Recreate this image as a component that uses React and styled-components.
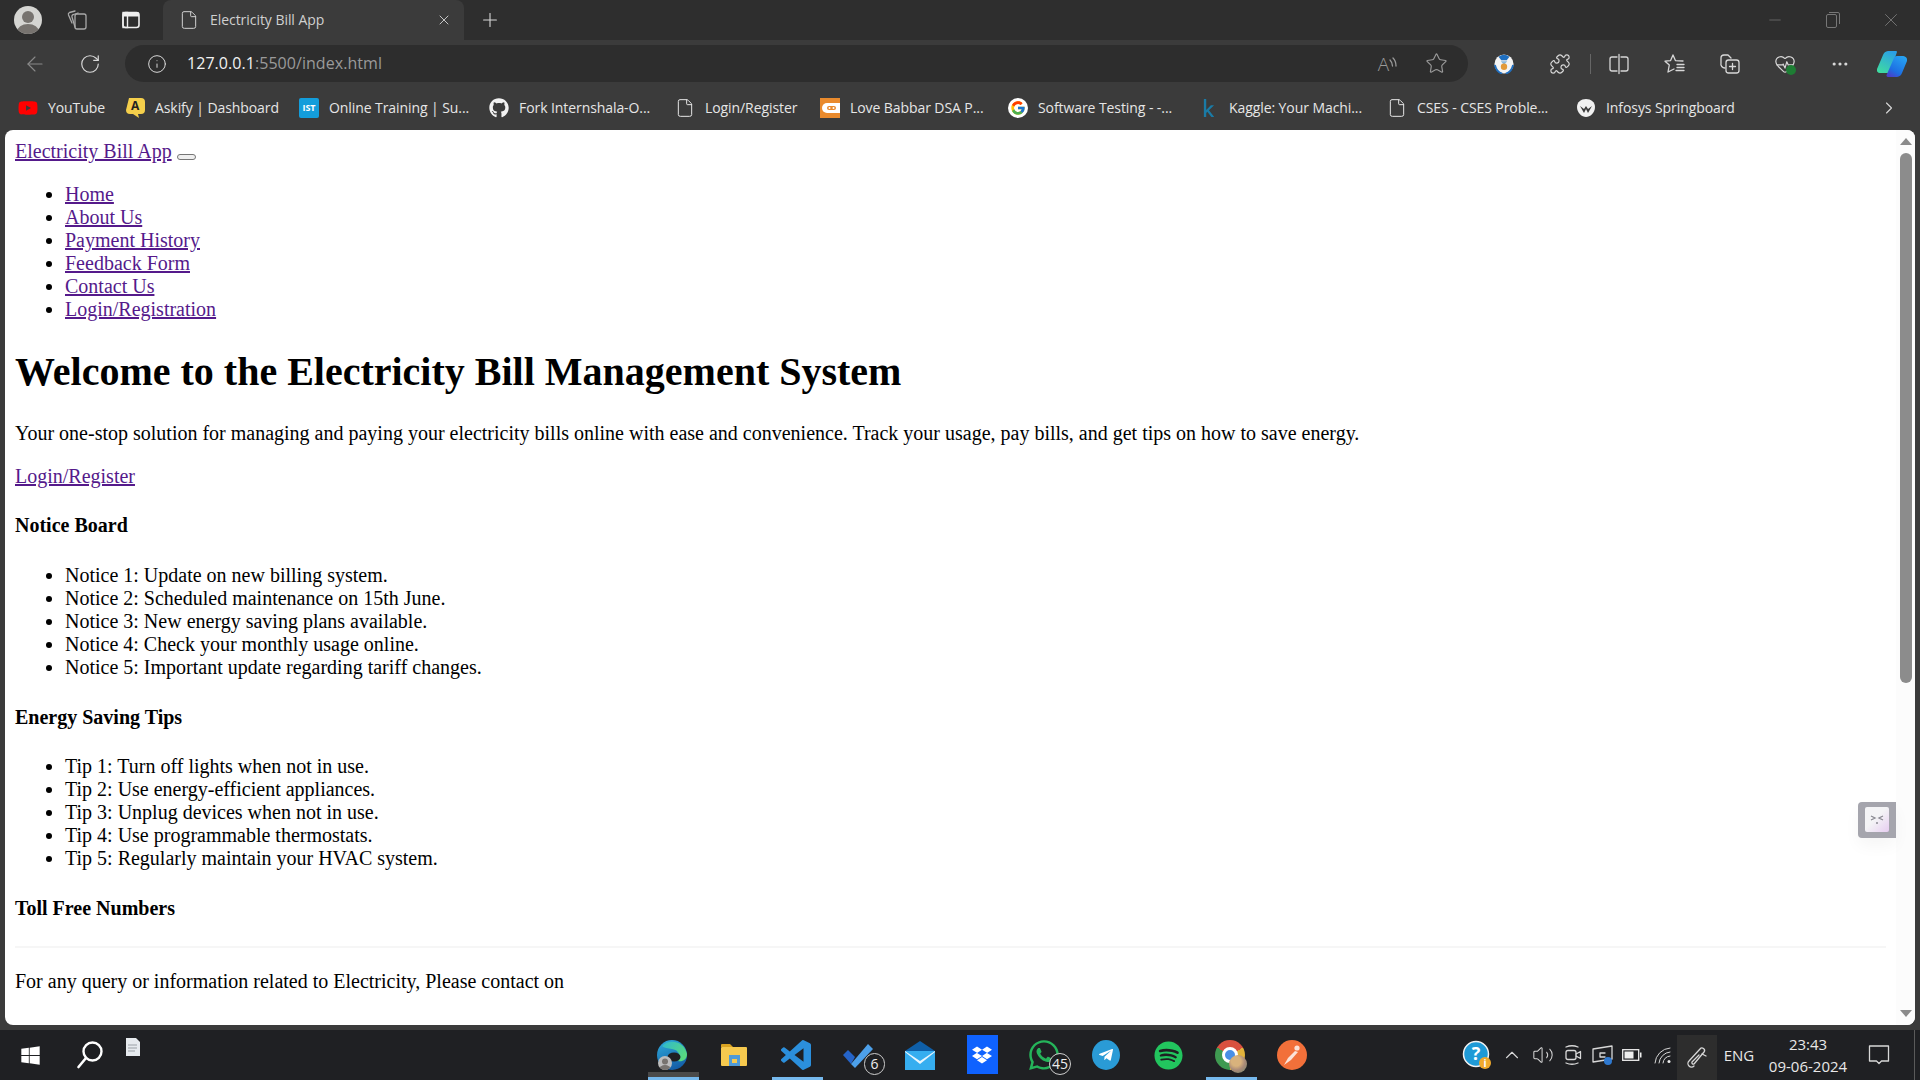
import React from 'react';
import styled, { createGlobalStyle } from 'styled-components';
import {
  ArrowLeft, RotateCw, Info, Star, X, Plus, Minus, ChevronRight, ChevronUp, File, Puzzle,
  HeartPulse, MoreHorizontal, Volume2,
} from 'lucide-react';
import { FaGithub, FaYoutube, FaWindows, FaWhatsapp, FaTelegramPlane, FaSpotify, FaDropbox, FaKaggle } from 'react-icons/fa';
import { FcGoogle } from 'react-icons/fc';

const GlobalStyle = createGlobalStyle`
  html, body { margin: 0; padding: 0; height: 100%; overflow: hidden; }
  #root { height: 100%; }
`;

const Screen = styled.div`
  width: 1920px;
  height: 1080px;
  display: flex;
  flex-direction: column;
  background: #3b3b3b;
  font-family: "Open Sans", "Liberation Sans", sans-serif;
  color: #e4e4e4;
`;

const TabStrip = styled.div`
  height: 40px;
  display: flex;
  align-items: stretch;
  background: #2e2e2e;
`;

const Slot = styled.div`
  width: ${(p) => p.$w}px;
  flex-shrink: 0;
  display: flex;
  align-items: center;
  justify-content: center;
  color: ${(p) => p.$color || '#d8d8d8'};
  position: relative;
`;

const Spacer = styled.div`
  flex: 1;
`;

const Avatar = styled.div`
  width: 28px;
  height: 28px;
  border-radius: 50%;
  background: #d5d5d2;
  overflow: hidden;
  display: flex;
`;

const Tab = styled.div`
  width: 301px;
  display: flex;
  align-items: center;
  background: #3b3b3b;
  border-radius: 8px 8px 0 0;
  padding-left: 16px;
  box-sizing: border-box;
  color: #d0d0d0;
`;

const TabTitle = styled.span`
  font-size: 14px;
  line-height: 18px;
  margin: 0 0 1px 11px;
  width: 226px;
  flex-shrink: 0;
  letter-spacing: -0.05px;
`;

const Toolbar = styled.div`
  height: 45px;
  box-sizing: border-box;
  padding: 2px 0 0 13px;
  display: flex;
  align-items: center;
`;

const AddressBar = styled.div`
  width: 1343px;
  height: 37px;
  margin-left: 2px;
  margin-right: 11px;
  border-radius: 19px;
  background: #2d2d2d;
  display: flex;
  align-items: stretch;
  padding-left: 16px;
  padding-right: 7px;
  box-sizing: border-box;
  flex-shrink: 0;
`;

const Url = styled.div`
  flex: 1;
  margin-left: 14px;
  font-size: 16px;
  line-height: 37px;
  letter-spacing: 0.05px;
  color: #f2f2f2;
`;

const UrlMuted = styled.span`
  color: #9a9a9a;
`;

const ReadLetter = styled.span`
  font-size: 19px;
  line-height: 24px;
  font-weight: 300;
  color: #9a9a9a;
`;

const Divider = styled.div`
  width: 1px;
  height: 20px;
  background: #666;
`;

const BookmarkBar = styled.div`
  height: 45px;
  display: flex;
  align-items: center;
  padding-left: 18px;
`;

const Bookmark = styled.div`
  width: ${(p) => p.$w}px;
  flex-shrink: 0;
  display: flex;
  align-items: center;
  gap: 10px;
  font-size: 14px;
  letter-spacing: -0.08px;
  white-space: nowrap;
  color: #e6e6e6;
`;

const BookmarkIcon = styled.div`
  width: 20px;
  height: 20px;
  flex-shrink: 0;
  display: flex;
  align-items: center;
  justify-content: center;
`;

const IstLogo = styled.div`
  width: 20px;
  height: 20px;
  background: #139ddb;
  border-radius: 2px;
  color: #fff;
  font-size: 9px;
  font-weight: 700;
  line-height: 20px;
  text-align: center;
`;

const GoogleDisc = styled.div`
  width: 20px;
  height: 20px;
  background: #fff;
  border-radius: 50%;
  display: flex;
  align-items: center;
  justify-content: center;
`;

const Window = styled.div`
  flex: 1;
  min-height: 0;
  margin: 0 5px 5px;
  display: flex;
  background: #fff;
  border-radius: 8px;
  overflow: hidden;
  position: relative;
`;

const Content = styled.main`
  flex: 1;
  min-width: 0;
  padding: 10px;
  overflow: hidden;
  font-family: "Liberation Serif", "Times New Roman", serif;
  font-size: 20px;
  line-height: 23px;
  color: #000;

  a { color: #551a8b; text-decoration: underline; }
`;

const Navbar = styled.nav``;

const EmptyToggle = styled.button`
  width: 19px;
  height: 6px;
  padding: 0;
  margin: 0;
  border: 1px solid #767676;
  border-radius: 3px;
  background: #efefef;
  vertical-align: -1px;
`;

const List = styled.ul`
  margin: 20px 0;
  padding-left: 50px;
`;

const Heading = styled.h1`
  font-size: 40px;
  line-height: 46px;
  margin: 28px 0 26.8px;
`;

const Paragraph = styled.p`
  margin: 20px 0;
`;

const SubHeading = styled.h4`
  font-size: 20px;
  line-height: 23px;
  margin: 26.6px 0;
`;

const Rule = styled.hr`
  border: 0;
  height: 2px;
  margin: 26.6px 0 22px;
  background: #f6f6f6;
`;

const ScrollTrack = styled.div`
  width: 19px;
  flex-shrink: 0;
  background: #fcfcfc;
  display: flex;
  flex-direction: column;
  align-items: center;
  padding-top: 8px;
  box-sizing: border-box;
`;

const ArrowUp = styled.div`
  width: 0;
  height: 0;
  border-left: 6px solid transparent;
  border-right: 6px solid transparent;
  border-bottom: 7px solid #8b8b8b;
`;

const ArrowDown = styled.div`
  width: 0;
  height: 0;
  margin-top: auto;
  margin-bottom: 8px;
  border-left: 6px solid transparent;
  border-right: 6px solid transparent;
  border-top: 7px solid #8b8b8b;
`;

const Thumb = styled.div`
  width: 12px;
  height: 530px;
  margin-top: 8px;
  border-radius: 6px;
  background: #8c8c8c;
`;

const FloatTab = styled.div`
  position: absolute;
  right: 19px;
  top: 672px;
  width: 38px;
  height: 36px;
  box-sizing: border-box;
  padding: 5px 7px 6px;
  background: #a5a5ad;
  border-radius: 4px 0 0 4px;
  box-shadow: 0 8px 16px rgba(0, 0, 0, 0.04);
`;

const FloatFace = styled.div`
  height: 100%;
  border-radius: 2px;
  background: linear-gradient(135deg, #f4f4f6 45%, #e6cdf0 100%);
  display: flex;
`;

const Taskbar = styled.div`
  height: 50px;
  display: flex;
  align-items: stretch;
  background: #1f2023;
`;

const TaskButton = styled(Slot)`
  width: 62px;
`;

const DocSlot = styled(Slot)`
  justify-content: flex-start;
  align-items: flex-start;
  padding: 8px 0 0 6px;
  box-sizing: border-box;
`;

const RunningBar = styled.div`
  position: absolute;
  bottom: 0;
  left: 7px;
  right: 4px;
  height: 3px;
  background: #76b9ed;
`;

const ActiveGlow = styled.div`
  position: absolute;
  bottom: 3px;
  left: 7px;
  right: 4px;
  height: 5px;
  background: #4a4a4a;
`;

const CountBadge = styled.div`
  position: absolute;
  left: ${(p) => p.$left}px;
  top: 23px;
  min-width: 21px;
  height: 22px;
  padding: 0 2px;
  box-sizing: border-box;
  border: 1px solid #cfcfcf;
  border-radius: 11px;
  background: #1f2023;
  color: #eee;
  font-size: 14px;
  line-height: 20px;
  text-align: center;
`;

const ChromeBall = styled.div`
  width: 30px;
  height: 30px;
  border-radius: 50%;
  background: conic-gradient(from 60deg, #e2b33c 0 120deg, #3f9a51 120deg 240deg, #d9503f 240deg 360deg);
  display: flex;
  align-items: center;
  justify-content: center;
`;

const ChromeEye = styled.div`
  width: 10px;
  height: 10px;
  border-radius: 50%;
  background: #4a8fe6;
  border: 3px solid #fff;
`;

const ChromeProfile = styled.div`
  position: absolute;
  left: 30px;
  top: 25px;
  width: 18px;
  height: 18px;
  border-radius: 50%;
  background: radial-gradient(circle at 40% 35%, #d8b27c 0 30%, #a98a78 55%, #6f8a6a 100%);
`;

const EdgeProfile = styled.div`
  position: absolute;
  left: 17px;
  top: 26px;
  width: 14px;
  height: 14px;
  border-radius: 50%;
  background: #bdbdbd;
  overflow: hidden;
  display: flex;
`;

const TelegramPlane = styled(FaTelegramPlane)`
  position: absolute;
  color: #fff;
`;

const HealthBadge = styled.div`
  position: absolute;
  right: 1px;
  bottom: 0;
  width: 10px;
  height: 10px;
  border-radius: 50%;
  background: #1e7d34;
`;

const PenBox = styled(Slot)`
  background: #2d2d2d;
  margin-top: 5px;
`;

const TrayText = styled.div`
  font-size: 15px;
  color: #e8e8e8;
`;

const Clock = styled.div`
  width: 94px;
  flex-shrink: 0;
  display: flex;
  flex-direction: column;
  align-items: center;
  justify-content: center;
  gap: 4px;
  font-size: 15px;
  line-height: 18px;
  color: #e8e8e8;
`;

const ShowDesktop = styled.div`
  width: 1px;
  margin: 0 5px 0 11px;
  flex-shrink: 0;
  background: #5a5a5a;
`;

const line = { fill: 'none', stroke: 'currentColor', strokeWidth: 1.3, strokeLinecap: 'round', strokeLinejoin: 'round' };

const navLinks = ['Home', 'About Us', 'Payment History', 'Feedback Form', 'Contact Us', 'Login/Registration'];
const notices = [
  'Notice 1: Update on new billing system.',
  'Notice 2: Scheduled maintenance on 15th June.',
  'Notice 3: New energy saving plans available.',
  'Notice 4: Check your monthly usage online.',
  'Notice 5: Important update regarding tariff changes.',
];
const tips = [
  'Tip 1: Turn off lights when not in use.',
  'Tip 2: Use energy-efficient appliances.',
  'Tip 3: Unplug devices when not in use.',
  'Tip 4: Use programmable thermostats.',
  'Tip 5: Regularly maintain your HVAC system.',
];

const PersonIcon = ({ size }) => (
  <svg width={size} height={size} viewBox="0 0 28 28">
    <circle cx="14" cy="11" r="6" fill="#77736f" />
    <ellipse cx="14" cy="26" rx="11" ry="8" fill="#77736f" />
  </svg>
);

const WorkspacesIcon = () => (
  <svg width="22" height="24" viewBox="0 0 22 24" color="#a9a9a9">
    <rect x="9" y="6" width="11" height="15" rx="2" {...line} />
    <path d="M9 19 L6 9 a2 2 0 0 1 1.5 -2.5 L12 5" {...line} />
    <path d="M6 15 L2.5 7 a2 2 0 0 1 1 -2.5 L9 3" {...line} />
  </svg>
);

const TabActionsIcon = () => (
  <svg width="20" height="20" viewBox="0 0 20 20">
    <rect x="2" y="2.5" width="16" height="15" rx="2.5" fill="none" stroke="#eee" strokeWidth="1.6" />
    <rect x="2" y="2.5" width="16" height="4" fill="#eee" />
    <rect x="2" y="2.5" width="4.5" height="15" fill="none" stroke="#eee" strokeWidth="1.4" />
  </svg>
);

const ReadWaves = () => (
  <svg width="8" height="14" viewBox="0 0 8 14" color="#9a9a9a">
    <path d="M1 3 q2.5 2.5 2.5 6 M4 1 q3 3 3 8" {...line} />
  </svg>
);

const SplitIcon = () => (
  <svg width="24" height="24" viewBox="0 0 24 24">
    <path d="M10 5 H5 a2 2 0 0 0 -2 2 V17 a2 2 0 0 0 2 2 H10 M14 5 H19 a2 2 0 0 1 2 2 V17 a2 2 0 0 1 -2 2 H14 M12 2.5 V21.5" {...line} />
  </svg>
);

const FavoritesIcon = () => (
  <svg width="24" height="24" viewBox="0 0 24 24">
    <path d="M10 3 L12.4 8.6 L20 9 M10 3 L7.6 8.6 L2 9.2 L6.3 13 L5 20 L11 17" {...line} />
    <path d="M14 12.5 H21 M14 15.5 H21 M13 18.5 H21" {...line} />
  </svg>
);

const CollectionsIcon = () => (
  <svg width="24" height="24" viewBox="0 0 24 24">
    <path d="M13 6 L10 3 H6 a3 3 0 0 0 -3 3 V11 a4 4 0 0 0 4 5" {...line} />
    <rect x="8" y="8" width="13" height="13" rx="2.5" {...line} />
    <path d="M14.5 11.5 V17.5 M11.5 14.5 H17.5" {...line} />
  </svg>
);

const CopilotIcon = () => (
  <svg width="30" height="28" viewBox="0 0 30 28">
    <defs>
      <linearGradient id="copA" x1="0.7" y1="0" x2="0.2" y2="1">
        <stop offset="0" stopColor="#2b9fe6" />
        <stop offset="1" stopColor="#3fdca0" />
      </linearGradient>
      <linearGradient id="copB" x1="0.8" y1="0" x2="0.2" y2="1">
        <stop offset="0" stopColor="#27a4f2" />
        <stop offset="0.7" stopColor="#1d6fe3" />
        <stop offset="1" stopColor="#4a3fc9" />
      </linearGradient>
    </defs>
    <path d="M11 1 H19 a1 1 0 0 1 1 1 L13 22 a2 2 0 0 1 -2 1 H3 a3 3 0 0 1 -3 -4 L6 5 a6 6 0 0 1 5 -4 Z" fill="url(#copA)" />
    <path d="M20 6 H26 a4 4 0 0 1 4 5 L25 23 a6 6 0 0 1 -5 4 H11 a2 2 0 0 1 -1 -3 L17 8 a3 3 0 0 1 3 -2 Z" fill="url(#copB)" />
  </svg>
);

const GuardIcon = () => (
  <svg width="20" height="20" viewBox="0 0 22 22">
    <circle cx="11" cy="11" r="10.5" fill="#f4f4f4" />
    <path d="M5 3 a10 10 0 0 1 12 0 L14 7 H8 Z" fill="#1f6fc0" />
    <path d="M7.5 8 H14.5 L11 12 Z" fill="#8ab8de" />
    <circle cx="11" cy="14" r="3.5" fill="#e29a3a" />
    <path d="M1 12 q2 8 8 9.5 M21 12 q-2 8 -8 9.5" fill="none" stroke="#1f6fc0" strokeWidth="2" />
  </svg>
);

const AskifyIcon = () => (
  <svg width="20" height="22" viewBox="0 0 20 22">
    <path d="M4 1 H16 a4 4 0 0 1 4 4 V13 a4 4 0 0 1 -4 4 H13 L14 21 L8 17 H5 a4 4 0 0 1 -4 -4 Z" fill="#f5cf4b" />
    <text x="10" y="13" fontSize="12" fontWeight="700" textAnchor="middle" fill="#222" fontFamily="Open Sans, sans-serif">A</text>
  </svg>
);

const BabbarIcon = () => (
  <svg width="20" height="20" viewBox="0 0 20 20">
    <rect width="20" height="20" fill="#e98a2d" />
    <path d="M20 5 H7 a5 5 0 0 0 0 10 H20 Z" fill="#fff" />
    <rect x="7" y="8" width="9" height="4" rx="2" fill="#e98a2d" />
    <circle cx="9.5" cy="10" r="1" fill="#fff" />
    <circle cx="13.5" cy="10" r="1" fill="#fff" />
  </svg>
);

const InfosysIcon = () => (
  <svg width="20" height="20" viewBox="0 0 20 20">
    <path d="M10 1 C15 1 19 4 19 9 C19 15 14 19 10 19 C6 19 1 15 1 9 C1 4 5 1 10 1 Z" fill="#f1f1f1" />
    <path d="M4 8 L8 15 L10 11 L12 15 L16 8 L12 11 L10 8 L8 11 Z" fill="#3b3b3b" />
  </svg>
);

const SearchGlass = () => (
  <svg width="30" height="30" viewBox="0 0 30 30">
    <circle cx="17.5" cy="11.5" r="9" fill="none" stroke="#fff" strokeWidth="2.4" />
    <path d="M11 18 L3.5 27" stroke="#fff" strokeWidth="2.6" strokeLinecap="round" />
  </svg>
);

const DocThumb = () => (
  <svg width="14" height="18" viewBox="0 0 14 18">
    <path d="M0 0 H10 L14 4 V18 H0 Z" fill="#e6eaee" />
    <path d="M2 7 H11 M2 10 H11 M2 13 H9" stroke="#9aa0a6" strokeWidth="1" />
  </svg>
);

const EdgeIcon = () => (
  <svg width="30" height="30" viewBox="0 0 30 30">
    <defs>
      <linearGradient id="edgeA" x1="0.1" y1="0" x2="0.5" y2="1">
        <stop offset="0" stopColor="#2ea9d9" />
        <stop offset="1" stopColor="#145fa8" />
      </linearGradient>
      <linearGradient id="edgeB" x1="0" y1="0" x2="1" y2="0.6">
        <stop offset="0" stopColor="#2fb8cf" />
        <stop offset="1" stopColor="#58d97f" />
      </linearGradient>
    </defs>
    <circle cx="15" cy="15" r="15" fill="url(#edgeA)" />
    <path d="M5 6 C11 -1 27 0 30 14 C30 20 25 22 21 21 C24 18 23 10 15 9 C11 8 7 8 5 6 Z" fill="url(#edgeB)" />
    <ellipse cx="17" cy="17" rx="6.5" ry="4.5" fill="#1f2023" />
  </svg>
);

const FolderIcon = () => (
  <svg width="28" height="24" viewBox="0 0 28 24">
    <path d="M1 2 a1 1 0 0 1 1 -1 H10 L13 4 H1 Z" fill="#d9a322" />
    <rect x="1" y="4" width="26" height="19" rx="1" fill="#f6c94e" />
    <rect x="9" y="12" width="11" height="11" fill="#4f9ad6" />
    <rect x="12" y="16" width="5" height="4" fill="#f6c94e" />
  </svg>
);

const VsCodeIcon = () => (
  <svg width="30" height="30" viewBox="0 0 24 24">
    <path fill="#2b8fdc" d="M23.15 2.587L18.21.21a1.494 1.494 0 0 0-1.705.29l-9.46 8.63-4.12-3.128a.999.999 0 0 0-1.276.057L.327 7.261A1 1 0 0 0 .326 8.74L3.899 12 .326 15.26a1 1 0 0 0 .001 1.479L1.65 17.94a.999.999 0 0 0 1.276.057l4.12-3.128 9.46 8.63a1.492 1.492 0 0 0 1.704.29l4.942-2.377A1.5 1.5 0 0 0 24 20.06V3.939a1.5 1.5 0 0 0-.85-1.352zm-5.146 14.861L10.826 12l7.178-5.448v10.896z" />
  </svg>
);

const TodoIcon = () => (
  <svg width="32" height="28" viewBox="0 0 32 28">
    <path d="M1 14 L6 9 L13 16 L9 23 Z" fill="#2564c9" />
    <path d="M9 23 L26 3 L31 8 L13 27 Z" fill="#4da0ea" />
  </svg>
);

const MailIcon = () => (
  <svg width="32" height="29" viewBox="0 0 32 29">
    <path d="M1 10 L16 0 L31 10 V14 H1 Z" fill="#0f5fa8" />
    <rect x="1" y="10" width="30" height="19" fill="#36aef0" />
    <path d="M1 10 L16 20 L31 10 V11 L16 23 L1 11 Z" fill="#e8f6fe" />
  </svg>
);

const DropboxSquare = styled.div`
  width: 31px;
  height: 39px;
  background: #0f62fe;
  display: flex;
  align-items: center;
  justify-content: center;
  color: #fff;
  margin-bottom: 1px;
`;

const PostmanIcon = () => (
  <svg width="30" height="30" viewBox="0 0 30 30">
    <circle cx="15" cy="15" r="15" fill="#f2703a" />
    <circle cx="20" cy="8" r="2.6" fill="#fbe3d8" />
    <path d="M18 11 L21 12 L14 20 L7 25 L11 18 Z" fill="#fbe3d8" />
  </svg>
);

const HelpIcon = () => (
  <svg width="30" height="30" viewBox="0 0 30 30">
    <circle cx="14" cy="14" r="12.5" fill="#1f9ad6" stroke="#f2f2f2" strokeWidth="1.5" />
    <text x="14" y="20" fontSize="18" fontWeight="700" textAnchor="middle" fill="#fff" fontFamily="Open Sans, sans-serif">?</text>
    <circle cx="23" cy="23" r="6" fill="#f0a92c" />
    <text x="23" y="27" fontSize="10" fontWeight="700" textAnchor="middle" fill="#fff" fontFamily="Open Sans, sans-serif">i</text>
  </svg>
);

const MeetIcon = () => (
  <svg width="20" height="22" viewBox="0 0 20 22">
    <rect x="3" y="6.5" width="10" height="9" rx="2" {...line} />
    <path d="M13 10 L17.5 7.5 V14.5 L13 12" {...line} />
    <path d="M3 3 Q9 0.5 15 3 M3 19 Q9 21.5 15 19" {...line} />
  </svg>
);

const DisplayIcon = () => (
  <svg width="24" height="22" viewBox="0 0 24 22">
    <path d="M2 5 L21 2 V15 L2 18 Z" {...line} />
    <path d="M9 9 H14 M9 13 H14 M9 9 V13" {...line} />
    <circle cx="17" cy="17" r="4" fill="#2f79d0" />
  </svg>
);

const BatteryIcon = () => (
  <svg width="20" height="12" viewBox="0 0 20 12">
    <rect x="0.7" y="0.7" width="16" height="10.6" fill="none" stroke="#eee" strokeWidth="1.3" />
    <rect x="2.5" y="2.5" width="9" height="7" fill="#eee" />
    <rect x="18" y="3.5" width="1.5" height="5" fill="#eee" />
  </svg>
);

const WifiIcon = () => (
  <svg width="18" height="18" viewBox="0 0 18 18">
    <path d="M1 17 A16 16 0 0 1 16 2 M5 17 A12 12 0 0 1 16 6 M9 17 A8 8 0 0 1 16 10" {...line} strokeWidth="1" />
    <circle cx="15" cy="15.5" r="1.5" fill="#eee" />
  </svg>
);

const PenIcon = () => (
  <svg width="22" height="24" viewBox="0 0 22 24">
    <path d="M8 20 a3.5 3.5 0 0 1 -5 -5 L14 3 a2.5 2.5 0 0 1 4 3 L8 18 a1.5 1.5 0 0 1 -2 -2 L13 9" {...line} />
    <path d="M16 8 L20 10" {...line} />
  </svg>
);

const NotifyIcon = () => (
  <svg width="22" height="22" viewBox="0 0 22 22">
    <path d="M1.5 2 H20.5 V17 H13.5 L11 19.5 L8.5 17 H1.5 Z" {...line} />
  </svg>
);

const bookmarks = [
  { w: 107, label: 'YouTube', icon: <FaYoutube size={20} color="#f00" /> },
  { w: 174, label: 'Askify | Dashboard', icon: <AskifyIcon /> },
  { w: 190, label: 'Online Training | Su...', icon: <IstLogo>IST</IstLogo> },
  { w: 186, label: 'Fork Internshala-O...', icon: <FaGithub size={20} color="#f2f2f2" /> },
  { w: 145, label: 'Login/Register', icon: <File size={20} strokeWidth={1.2} /> },
  { w: 188, label: 'Love Babbar DSA P...', icon: <BabbarIcon /> },
  { w: 191, label: 'Software Testing - -...', icon: <GoogleDisc><FcGoogle size={16} /></GoogleDisc> },
  { w: 188, label: 'Kaggle: Your Machi...', icon: <FaKaggle size={18} color="#1a7ba6" /> },
  { w: 189, label: 'CSES - CSES Proble...', icon: <File size={20} strokeWidth={1.2} /> },
  { w: 303, label: 'Infosys Springboard', icon: <InfosysIcon /> },
];

function App() {
  return (
    <Screen>
      <GlobalStyle />

      <TabStrip>
        <Slot $w={56}><Avatar><PersonIcon size={28} /></Avatar></Slot>
        <Slot $w={42}><WorkspacesIcon /></Slot>
        <Slot $w={65}><TabActionsIcon /></Slot>
        <Tab>
          <File size={20} strokeWidth={1.2} />
          <TabTitle>Electricity Bill App</TabTitle>
          <X size={16} strokeWidth={1.4} />
        </Tab>
        <Slot $w={52}><Plus size={22} strokeWidth={1.2} /></Slot>
        <Spacer />
        <Slot $w={58} $color="#777"><Minus size={18} strokeWidth={1} /></Slot>
        <Slot $w={58} $color="#777">
          <svg width="14" height="16" viewBox="0 0 14 16" fill="none" stroke="currentColor">
            <rect x="0.5" y="2.5" width="10" height="13" rx="1.5" />
            <path d="M3 .5 H12 a1.5 1.5 0 0 1 1.5 1.5 V12" />
          </svg>
        </Slot>
        <Slot $w={58} $color="#777"><X size={22} strokeWidth={1} /></Slot>
      </TabStrip>

      <Toolbar>
        <Slot $w={44} $color="#8a8a8a"><ArrowLeft size={24} strokeWidth={1.1} /></Slot>
        <Slot $w={66}><RotateCw size={22} strokeWidth={1.3} /></Slot>
        <AddressBar>
          <Slot $w={32}><Info size={20} strokeWidth={1.2} /></Slot>
          <Url>127.0.0.1<UrlMuted>:5500/index.html</UrlMuted></Url>
          <Slot $w={49}><ReadLetter>A</ReadLetter><ReadWaves /></Slot>
          <Slot $w={49} $color="#9a9a9a"><Star size={23} strokeWidth={1.2} /></Slot>
        </AddressBar>
        <Slot $w={50}><GuardIcon /></Slot>
        <Slot $w={61}><Puzzle size={22} strokeWidth={1.3} /></Slot>
        <Divider />
        <Slot $w={56}><SplitIcon /></Slot>
        <Slot $w={56}><FavoritesIcon /></Slot>
        <Slot $w={54}><CollectionsIcon /></Slot>
        <Slot $w={56}>
          <Slot $w={24}>
            <HeartPulse size={22} strokeWidth={1.3} />
            <HealthBadge />
          </Slot>
        </Slot>
        <Slot $w={54}><MoreHorizontal size={20} strokeWidth={1.8} /></Slot>
        <Slot $w={50}><CopilotIcon /></Slot>
      </Toolbar>

      <BookmarkBar>
        {bookmarks.map((b) => (
          <Bookmark key={b.label} $w={b.w}>
            <BookmarkIcon>{b.icon}</BookmarkIcon>
            {b.label}
          </Bookmark>
        ))}
        <Slot $w={20}><ChevronRight size={22} strokeWidth={1.3} /></Slot>
      </BookmarkBar>

      <Window>
        <Content>
          <Navbar>
            <a href="#home">Electricity Bill App</a> <EmptyToggle aria-label="menu" />
            <List>
              {navLinks.map((l) => <li key={l}><a href="#nav">{l}</a></li>)}
            </List>
          </Navbar>
          <Heading>Welcome to the Electricity Bill Management System</Heading>
          <Paragraph>Your one-stop solution for managing and paying your electricity bills online with ease and convenience. Track your usage, pay bills, and get tips on how to save energy.</Paragraph>
          <a href="#login">Login/Register</a>
          <SubHeading>Notice Board</SubHeading>
          <List>
            {notices.map((n) => <li key={n}>{n}</li>)}
          </List>
          <SubHeading>Energy Saving Tips</SubHeading>
          <List>
            {tips.map((t) => <li key={t}>{t}</li>)}
          </List>
          <SubHeading>Toll Free Numbers</SubHeading>
          <Rule />
          <Paragraph>For any query or information related to Electricity, Please contact on</Paragraph>
        </Content>
        <ScrollTrack>
          <ArrowUp />
          <Thumb />
          <ArrowDown />
        </ScrollTrack>
        <FloatTab>
          <FloatFace>
            <svg width="24" height="25" viewBox="0 0 24 25">
              <path d="M6 9 L10 11 L6 13 M18 9 L14 11 L18 13 M11 16 H13" fill="none" stroke="#8a8a92" strokeWidth="1.3" />
            </svg>
          </FloatFace>
        </FloatTab>
      </Window>

      <Taskbar>
        <Slot $w={60}><FaWindows size={21} color="#fff" /></Slot>
        <Slot $w={60}><SearchGlass /></Slot>
        <DocSlot $w={521}><DocThumb /></DocSlot>
        <TaskButton>
          <EdgeIcon />
          <EdgeProfile><PersonIcon size={14} /></EdgeProfile>
          <ActiveGlow />
          <RunningBar />
        </TaskButton>
        <TaskButton><FolderIcon /></TaskButton>
        <TaskButton><VsCodeIcon /><RunningBar /></TaskButton>
        <TaskButton><TodoIcon /><CountBadge $left={37}>6</CountBadge></TaskButton>
        <TaskButton><MailIcon /></TaskButton>
        <TaskButton><DropboxSquare><FaDropbox size={20} /></DropboxSquare></TaskButton>
        <TaskButton $color="#25b45a"><FaWhatsapp size={34} /><CountBadge $left={36}>45</CountBadge></TaskButton>
        <TaskButton>
          <svg width="28" height="30" viewBox="0 0 28 30">
            <ellipse cx="14" cy="15" rx="14" ry="15" fill="#2a9bd6" />
          </svg>
          <TelegramPlane size={16} />
        </TaskButton>
        <TaskButton $color="#22c55e"><FaSpotify size={29} /></TaskButton>
        <TaskButton>
          <ChromeBall><ChromeEye /></ChromeBall>
          <ChromeProfile />
          <RunningBar />
        </TaskButton>
        <TaskButton><PostmanIcon /></TaskButton>
        <Spacer />
        <Slot $w={34}><HelpIcon /></Slot>
        <Slot $w={36}><ChevronUp size={22} strokeWidth={1.2} /></Slot>
        <Slot $w={25}><Volume2 size={22} strokeWidth={1.1} /></Slot>
        <Slot $w={35}><MeetIcon /></Slot>
        <Slot $w={25}><DisplayIcon /></Slot>
        <Slot $w={34}><BatteryIcon /></Slot>
        <Slot $w={28}><WifiIcon /></Slot>
        <PenBox $w={40}><PenIcon /></PenBox>
        <Slot $w={44}><TrayText>ENG</TrayText></Slot>
        <Clock><span>23:43</span><span>09-06-2024</span></Clock>
        <Slot $w={48}><NotifyIcon /></Slot>
        <ShowDesktop />
      </Taskbar>
    </Screen>
  );
}

export default App;
